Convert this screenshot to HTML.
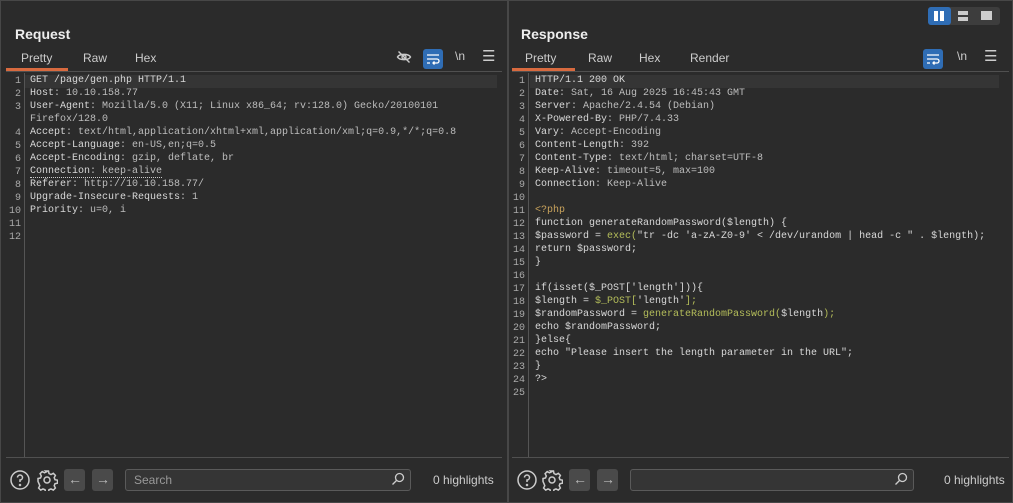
<!DOCTYPE html>
<html><head><meta charset="utf-8"><style>
*{margin:0;padding:0;box-sizing:border-box}
body{width:1013px;height:503px;background:#2b2b2b;font-family:"Liberation Sans",sans-serif;color:#ddd;position:relative;overflow:hidden}
.pane{position:absolute;top:0;height:503px;background:#2b2b2b;border:1px solid #474747}
#l{left:0;width:508px}
#r{left:508px;width:505px}
.title{position:absolute;top:25px;font-weight:bold;font-size:14px;color:#eee}
.tabs{position:absolute;top:50px;font-size:12px;color:#ccc}
.tabs span{position:absolute;white-space:nowrap}
.ul{position:absolute;top:67px;height:3px;background:#d86a3f}
.sep{position:absolute;height:1px;background:#505050}
.gut{position:absolute;top:72px;width:1px;height:384px;background:#555}
.code{position:absolute;top:73px;font-family:"Liberation Mono",monospace;font-size:10px;line-height:13px;white-space:pre;color:#d8d8d8}
.nums{position:absolute;top:74px;font-family:"Liberation Mono",monospace;font-size:10px;line-height:13px;white-space:pre;color:#aaa;text-align:right;width:14px}
.hl{position:absolute;top:74px;height:13px;background:#353535}
.v{color:#bdbdbd}
.y{color:#c9a35c}
.g{color:#b4bd5a}
.ico{position:absolute}
.btn{position:absolute;width:20px;height:20px;border-radius:3px;background:#4a4a4a}
.search{position:absolute;top:468px;height:22px;border:1px solid #5a5a5a;border-radius:3px;background:#353535;font-size:12px;color:#999;padding:3px 8px}
.hlt{position:absolute;top:472px;font-size:12px;color:#ccc}
</style></head><body>
<div class="pane" id="l">
<div class="title" style="left:14px">Request</div>
<div class="tabs"><span style="left:20px">Pretty</span><span style="left:82px">Raw</span><span style="left:134px">Hex</span></div>
<div class="ul" style="left:5px;width:62px"></div>
<div class="sep" style="left:5px;top:70px;width:496px"></div>
<svg class="ico" style="left:395px;top:48px" width="16" height="16" viewBox="0 0 16 16" fill="none" stroke="#ccc" stroke-width="1.4"><path d="M1.5 8C3.5 4.5 12.5 4.5 14.5 8C12.5 11.5 3.5 11.5 1.5 8Z"/><circle cx="8" cy="8" r="2"/><path d="M2.5 2.5L13.5 13.5"/></svg>
<div class="btn" style="left:422px;top:48px;background:#2f6db5"></div>
<svg class="ico" style="left:424px;top:50px" width="16" height="16" viewBox="0 0 16 16" fill="none" stroke="#fff" stroke-width="1.3"><path d="M2 4H14M2 8H12A2 2 0 0 1 12 12H8M9.5 10.5L8 12L9.5 13.5M2 12H5"/></svg>
<div class="ico" style="left:454px;top:48px;font-size:12px;color:#ccc">\n</div>
<div class="ico" style="left:481px;top:46px;font-size:15px;color:#ccc">☰</div>
<div class="hl" style="left:24px;width:472px"></div>
<div class="gut" style="left:23px"></div>
<div class="nums" style="left:6px">1
2
3

4
5
6
7
8
9
10
11
12</div>
<div class="code" style="left:29px;top:73px">GET /page/gen.php HTTP/1.1
Host<span class="v">: 10.10.158.77</span>
User-Agent<span class="v">: Mozilla/5.0 (X11; Linux x86_64; rv:128.0) Gecko/20100101</span>
<span class="v">Firefox/128.0</span>
Accept<span class="v">: text/html,application/xhtml+xml,application/xml;q=0.9,*/*;q=0.8</span>
Accept-Language<span class="v">: en-US,en;q=0.5</span>
Accept-Encoding<span class="v">: gzip, deflate, br</span>
<span style="border-bottom:1px dotted #ccc">Connection<span class="v">: keep-alive</span></span>
Referer<span class="v">: http://10.10.158.77/</span>
Upgrade-Insecure-Requests<span class="v">: 1</span>
Priority<span class="v">: u=0, i</span></div>
<div class="sep" style="left:5px;top:456px;width:496px"></div>
<svg class="ico" style="left:8px;top:468px" width="22" height="22" viewBox="0 0 22 22" fill="none" stroke="#ccc" stroke-width="1.5"><circle cx="11" cy="11" r="9"/><path d="M8.5 8.5A2.5 2.5 0 1 1 11 11V13"/><circle cx="11" cy="16" r=".5"/></svg>
<svg class="ico" style="left:35px;top:468px" width="22" height="22" viewBox="0 0 22 22" fill="none" stroke="#ccc" stroke-width="1.5"><circle cx="11" cy="11" r="3"/><path d="M9.5 2h3l.5 2.5 2 1 2.3-1.2 2.1 2.1-1.2 2.3.8 2 2.5.5v3l-2.5.5-.8 2 1.2 2.3-2.1 2.1-2.3-1.2-2 .8-.5 2.5h-3l-.5-2.5-2-.8-2.3 1.2-2.1-2.1 1.2-2.3-.8-2L2 12.5v-3l2.5-.5.8-2-1.2-2.3 2.1-2.1 2.3 1.2 2-1z"/></svg>
<div class="btn" style="left:63px;top:468px;width:21px;height:22px"></div>
<div class="ico" style="left:67px;top:470px;color:#bbb;font-size:14px">←</div>
<div class="btn" style="left:91px;top:468px;width:21px;height:22px"></div>
<div class="ico" style="left:95px;top:470px;color:#bbb;font-size:14px">→</div>
<div class="search" style="left:124px;width:286px">Search</div>
<svg class="ico" style="left:390px;top:471px" width="14" height="14" viewBox="0 0 14 14" fill="none" stroke="#ccc" stroke-width="1.3"><circle cx="8.5" cy="5.5" r="4"/><path d="M5.5 8.5L1.5 12.5"/></svg>
<div class="hlt" style="left:432px">0 highlights</div>
</div>

<div class="pane" id="r">
<div class="btn" style="left:419px;top:6px;width:72px;height:18px;background:#3d3d3d"></div>
<div class="btn" style="left:419px;top:6px;width:23px;height:18px;background:#2f6db5"></div>
<div class="ico" style="left:425px;top:10px;width:4px;height:10px;background:#fff"></div>
<div class="ico" style="left:431px;top:10px;width:4px;height:10px;background:#fff"></div>
<div class="ico" style="left:449px;top:10px;width:10px;height:4px;background:#ccc"></div>
<div class="ico" style="left:449px;top:16px;width:10px;height:4px;background:#ccc"></div>
<div class="ico" style="left:472px;top:10px;width:11px;height:9px;background:#ccc"></div>
<div class="title" style="left:12px">Response</div>
<div class="tabs"><span style="left:16px">Pretty</span><span style="left:79px">Raw</span><span style="left:130px">Hex</span><span style="left:181px">Render</span></div>
<div class="ul" style="left:3px;width:63px"></div>
<div class="sep" style="left:3px;top:70px;width:497px"></div>
<div class="btn" style="left:414px;top:48px;background:#2f6db5"></div>
<svg class="ico" style="left:416px;top:50px" width="16" height="16" viewBox="0 0 16 16" fill="none" stroke="#fff" stroke-width="1.3"><path d="M2 4H14M2 8H12A2 2 0 0 1 12 12H8M9.5 10.5L8 12L9.5 13.5M2 12H5"/></svg>
<div class="ico" style="left:448px;top:48px;font-size:12px;color:#ccc">\n</div>
<div class="ico" style="left:475px;top:46px;font-size:15px;color:#ccc">☰</div>
<div class="hl" style="left:21px;width:469px"></div>
<div class="gut" style="left:19px"></div>
<div class="nums" style="left:2px">1
2
3
4
5
6
7
8
9
10
11
12
13
14
15
16
17
18
19
20
21
22
23
24
25</div>
<div class="code" style="left:26px">HTTP/1.1 200 OK
Date<span class="v">: Sat, 16 Aug 2025 16:45:43 GMT</span>
Server<span class="v">: Apache/2.4.54 (Debian)</span>
X-Powered-By<span class="v">: PHP/7.4.33</span>
Vary<span class="v">: Accept-Encoding</span>
Content-Length<span class="v">: 392</span>
Content-Type<span class="v">: text/html; charset=UTF-8</span>
Keep-Alive<span class="v">: timeout=5, max=100</span>
Connection<span class="v">: Keep-Alive</span>

<span class="y">&lt;?php</span>
function generateRandomPassword($length) {
$password = <span class="g">exec(</span>"tr -dc 'a-zA-Z0-9' &lt; /dev/urandom | head -c " . $length);
return $password;
}

if(isset($_POST['length'])){
$length = <span class="g">$_POST[</span>'length'<span class="g">];</span>
$randomPassword = <span class="g">generateRandomPassword(</span>$length<span class="g">);</span>
echo $randomPassword;
}else{
echo "Please insert the length parameter in the URL";
}
?&gt;</div>
<div class="sep" style="left:3px;top:456px;width:497px"></div>
<svg class="ico" style="left:7px;top:468px" width="22" height="22" viewBox="0 0 22 22" fill="none" stroke="#ccc" stroke-width="1.5"><circle cx="11" cy="11" r="9"/><path d="M8.5 8.5A2.5 2.5 0 1 1 11 11V13"/><circle cx="11" cy="16" r=".5"/></svg>
<svg class="ico" style="left:32px;top:468px" width="22" height="22" viewBox="0 0 22 22" fill="none" stroke="#ccc" stroke-width="1.5"><circle cx="11" cy="11" r="3"/><path d="M9.5 2h3l.5 2.5 2 1 2.3-1.2 2.1 2.1-1.2 2.3.8 2 2.5.5v3l-2.5.5-.8 2 1.2 2.3-2.1 2.1-2.3-1.2-2 .8-.5 2.5h-3l-.5-2.5-2-.8-2.3 1.2-2.1-2.1 1.2-2.3-.8-2L2 12.5v-3l2.5-.5.8-2-1.2-2.3 2.1-2.1 2.3 1.2 2-1z"/></svg>
<div class="btn" style="left:60px;top:468px;width:21px;height:22px"></div>
<div class="ico" style="left:64px;top:470px;color:#bbb;font-size:14px">←</div>
<div class="btn" style="left:88px;top:468px;width:21px;height:22px"></div>
<div class="ico" style="left:92px;top:470px;color:#bbb;font-size:14px">→</div>
<div class="search" style="left:121px;width:284px"></div>
<svg class="ico" style="left:385px;top:471px" width="14" height="14" viewBox="0 0 14 14" fill="none" stroke="#ccc" stroke-width="1.3"><circle cx="8.5" cy="5.5" r="4"/><path d="M5.5 8.5L1.5 12.5"/></svg>
<div class="hlt" style="left:435px">0 highlights</div>
</div>
</body></html>
